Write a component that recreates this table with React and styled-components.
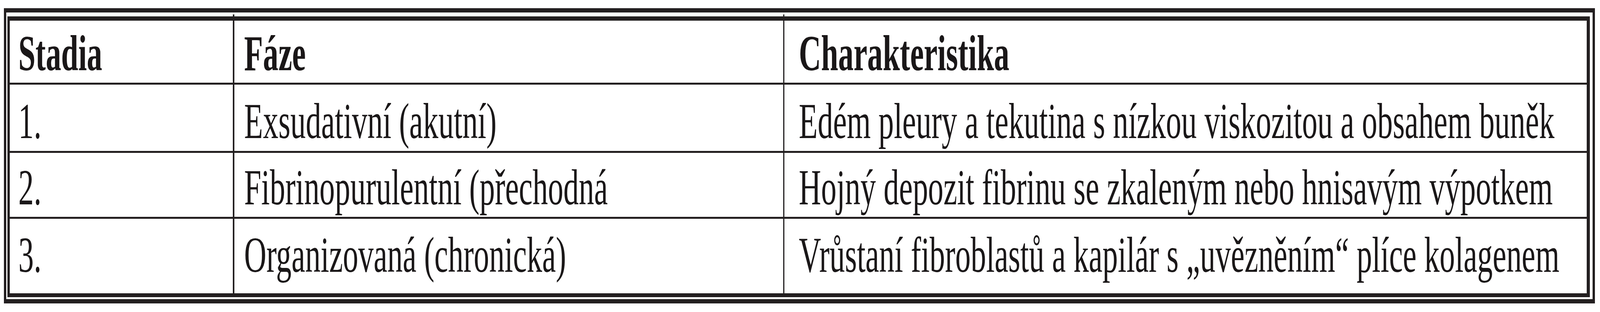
import { useLayoutEffect, useState } from 'react'
import styled, { createGlobalStyle } from 'styled-components'

// the reference is 6750px wide: horizontal sizes follow the window width,
// vertical sizes stay in pixels
const REF_WIDTH = 6750
const u = (n) => `calc(${n} * var(--u))`

const COLS = [942, 2315, 3385]
const RULE = 6

const GlobalStyle = createGlobalStyle`
  :root {
    --u: calc(100vw / ${REF_WIDTH});
  }
  html, body {
    margin: 0;
    padding: 0;
    background: #ffffff;
    overflow: hidden;
  }
  body {
    font-family: "Liberation Serif", "Times New Roman", serif;
    color: #1a1718;
  }
`

const Page = styled.div`
  padding: 21px 0 0 ${u(16)};
`

const Frame = styled.div`
  box-sizing: border-box;
  width: ${u(6712)};
  height: 757px;
  border-style: solid;
  border-color: #231f20;
  border-width: 11px ${u(11)};
  padding: 10px ${u(11)} 6px ${u(5)};
`

const Table = styled.div`
  position: relative;
  box-sizing: border-box;
  height: 720px;
  border-style: solid;
  border-color: #231f20;
  border-width: 11px ${u(10)} 11px ${u(11)};
  display: grid;
  grid-template-columns: ${COLS.map(u).join(' ')};
  grid-template-rows: 159px 170px 164px 191px;
  column-gap: ${u(RULE)};
  row-gap: 5px;
  background: #231f20;
`

const padByCol = [37, 42, 60]

const Cell = styled.div`
  overflow: hidden;
  background: #ffffff;
  font-size: 130px;
  line-height: 1;
  font-weight: ${({ $head }) => ($head ? 700 : 400)};
  white-space: nowrap;
  padding-top: ${({ $top }) => $top}px;
  padding-left: ${({ $col }) => u(padByCol[$col])};
`

const Text = styled.span`
  display: inline-block;
  transform: scaleX(var(--sx, 1));
  transform-origin: 0 0;
`

// the column rules poke a few pixels above the table's top border
const Tick = styled.span`
  position: absolute;
  top: -16px;
  left: ${({ $at }) => u($at)};
  width: ${u(RULE)};
  height: 5px;
  background: #231f20;
`

const head = ['Stadia', 'Fáze', 'Charakteristika']

const rows = [
  { top: 28, cells: ['1.', 'Exsudativní (akutní)', 'Edém pleury a tekutina s nízkou viskozitou a obsahem buněk'] },
  { top: 23, cells: ['2.', 'Fibrinopurulentní (přechodná', 'Hojný depozit fibrinu se zkaleným nebo hnisavým výpotkem'] },
  { top: 27, cells: ['3.', 'Organizovaná (chronická)', 'Vrůstaní fibroblastů a kapilár s „uvězněním“ plíce kolagenem'] },
]

export default function App() {
  const [sx, setSx] = useState(1)

  useLayoutEffect(() => {
    const update = () => setSx(Math.min(1, window.innerWidth / REF_WIDTH))
    update()
    window.addEventListener('resize', update)
    return () => window.removeEventListener('resize', update)
  }, [])

  return (
    <>
      <GlobalStyle />
      <Page style={{ '--sx': sx }}>
        <Frame>
          <Table>
            <Tick $at={COLS[0]} />
            <Tick $at={COLS[0] + RULE + COLS[1]} />
            {head.map((text, i) => (
              <Cell key={text} $head $top={18} $col={i}>
                <Text>{text}</Text>
              </Cell>
            ))}
            {rows.map((row, r) =>
              row.cells.map((text, i) => (
                <Cell key={`${r}-${i}`} $top={row.top} $col={i}>
                  <Text>{text}</Text>
                </Cell>
              ))
            )}
          </Table>
        </Frame>
      </Page>
    </>
  )
}
